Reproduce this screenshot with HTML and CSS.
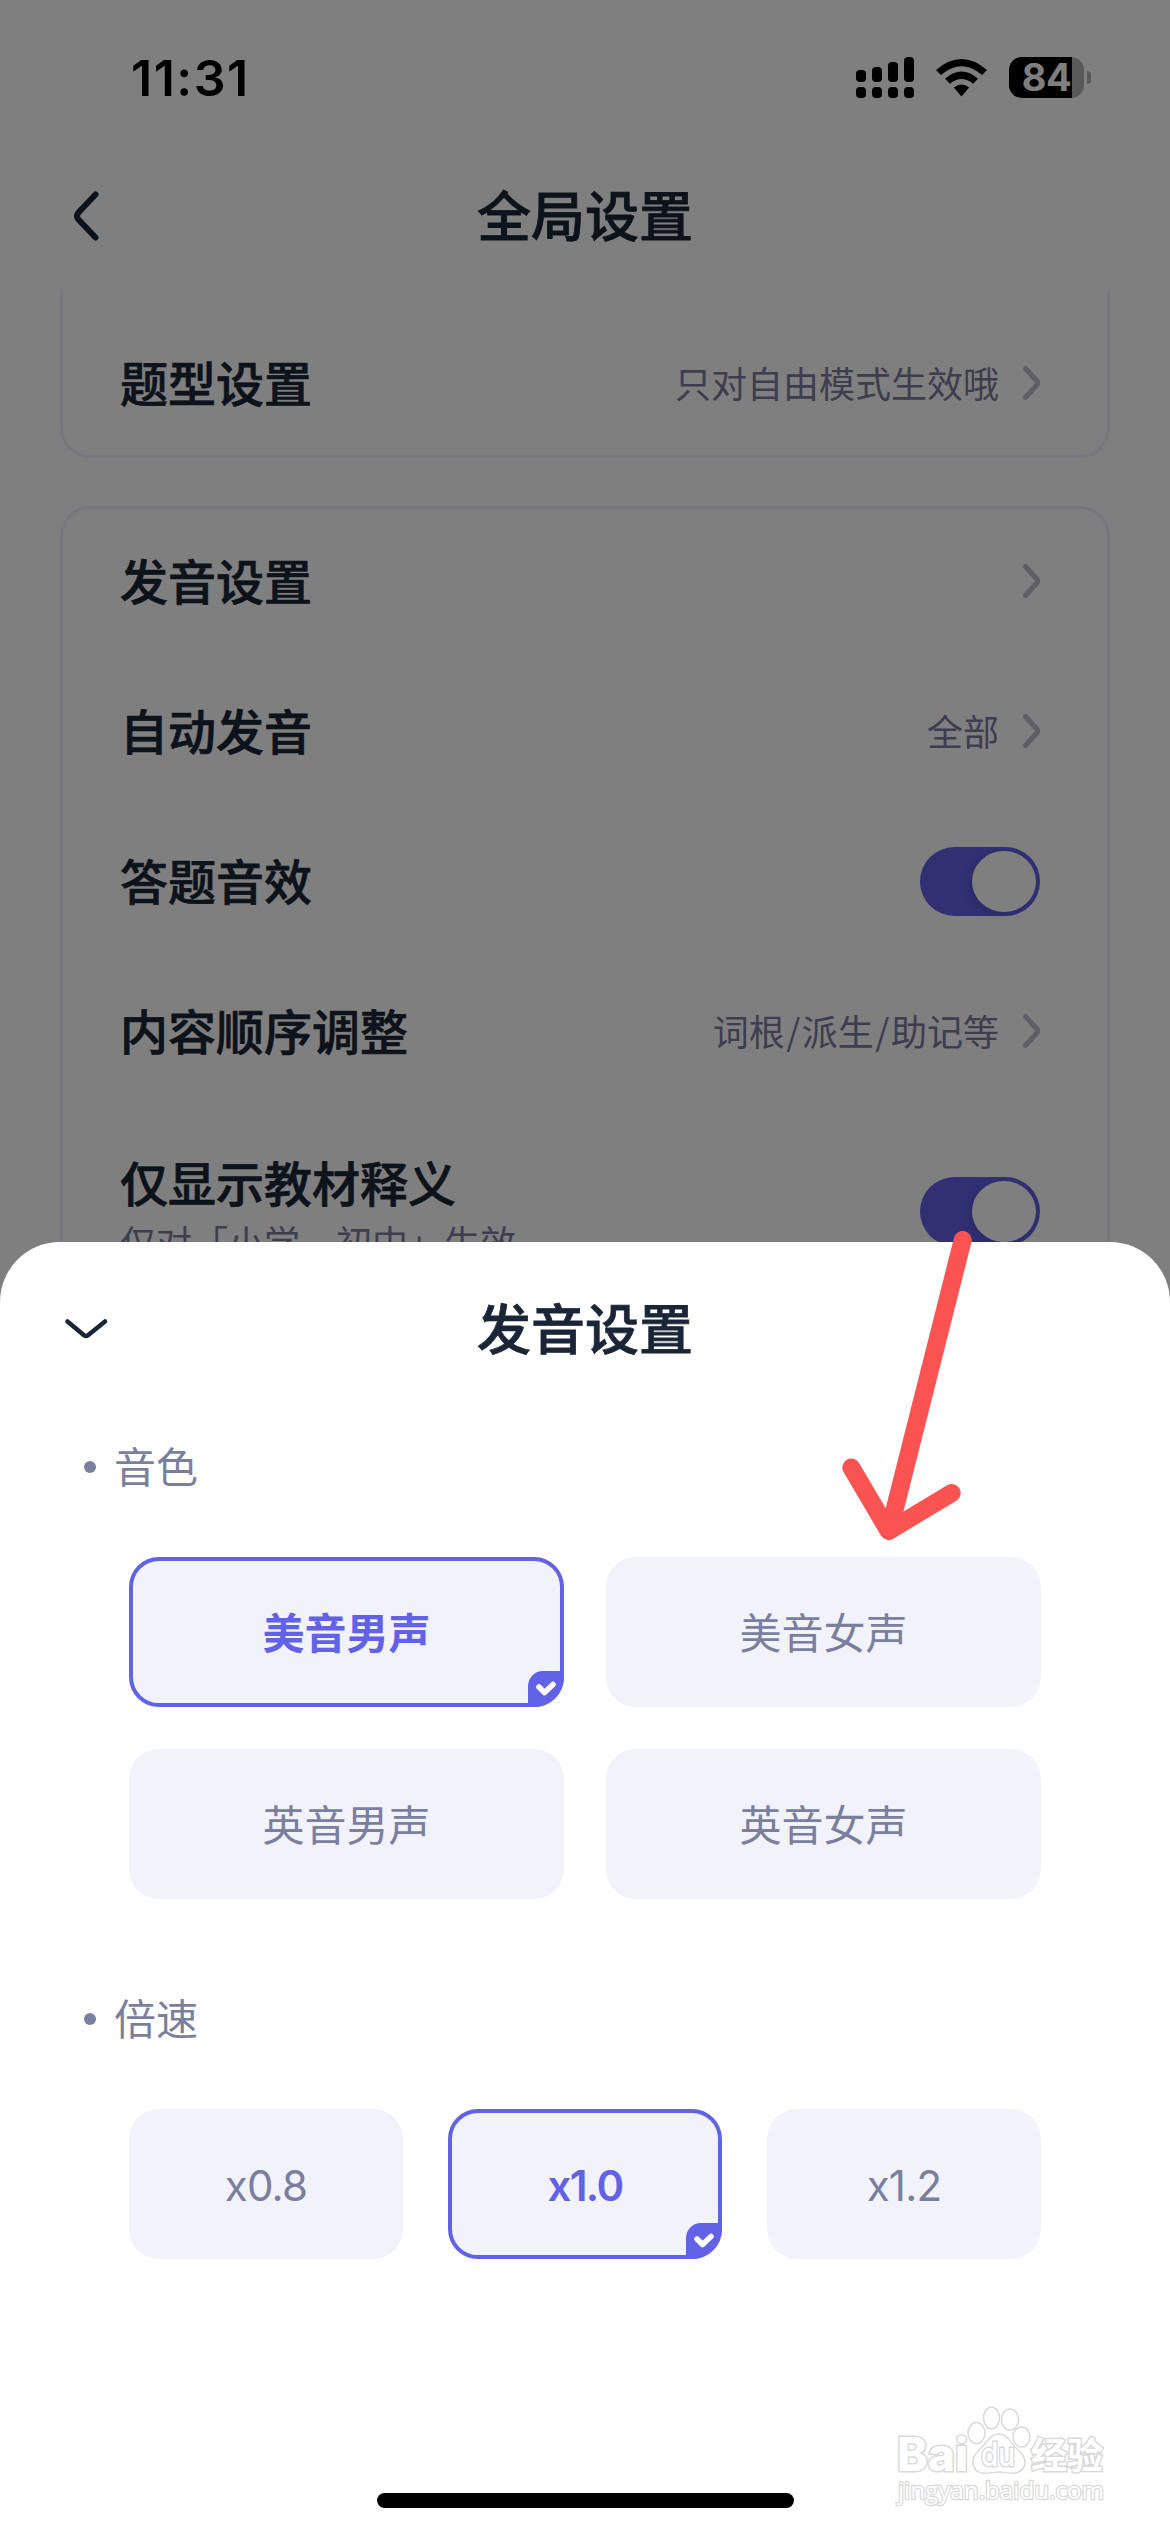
FILE: index.html
```html
<!DOCTYPE html>
<html lang="zh-CN">
<head>
<meta charset="utf-8">
<title>全局设置</title>
<link rel="stylesheet" href="styles.css">
</head>
<body>
<div class="screen">
  <div class="status">
    <span class="time">11:31</span>
    <div class="status-icons">
      <svg class="signal" width="58" height="41" viewBox="0 0 58 41">
        <rect x="0" y="13" width="10" height="12" rx="4"/><rect x="16" y="10" width="10" height="15" rx="4"/><rect x="32" y="5" width="10" height="20" rx="4"/><rect x="48" y="0" width="10" height="25" rx="4"/>
        <rect x="0" y="30" width="10" height="11" rx="4"/><rect x="16" y="30" width="10" height="11" rx="4"/><rect x="32" y="30" width="10" height="11" rx="4"/><rect x="48" y="30" width="10" height="11" rx="4"/>
      </svg>
      <svg class="wifi" width="51" height="38" viewBox="0 0 51 38">
        <path d="M0 11Q25.500 -11 51 11L46 16Q25.500 -1.500 5 16Z"/>
        <path d="M9 19.700Q25.500 5.500 42 19.700L37 24.700Q25.500 15.500 14 24.700Z"/>
        <path d="M17.800 28.500Q25.500 22.300 33.200 28.500L25.500 37.500Z"/>
      </svg>
      <div class="battery"><span class="battery-level">84</span></div>
      <span class="battery-nub"></span>
    </div>
  </div>
  <header class="nav">
    <svg class="back" width="26" height="50" viewBox="0 0 26 50"><path d="M22.500 3.500L5.500 21.500Q2.500 25 5.500 28.500L22.500 46.500"/></svg>
    <h1 class="title">全局设置</h1>
  </header>
  <main class="content">
    <section class="card card-cut">
      <div class="row"><span class="label">题型设置</span><span class="value">只对自由模式生效哦</span><svg class="chev" width="18" height="34" viewBox="0 0 18 34"><path d="M2.500 2.500L14 15.200Q15.500 17 14 18.800L2.500 31.500"/></svg></div>
    </section>
    <section class="card">
      <div class="row"><span class="label">发音设置</span><svg class="chev" width="18" height="34" viewBox="0 0 18 34"><path d="M2.500 2.500L14 15.200Q15.500 17 14 18.800L2.500 31.500"/></svg></div>
      <div class="row"><span class="label">自动发音</span><span class="value">全部</span><svg class="chev" width="18" height="34" viewBox="0 0 18 34"><path d="M2.500 2.500L14 15.200Q15.500 17 14 18.800L2.500 31.500"/></svg></div>
      <div class="row"><span class="label">答题音效</span><span class="switch"><i class="knob"></i></span></div>
      <div class="row"><span class="label">内容顺序调整</span><span class="value">词根<span class="slash">/</span>派生<span class="slash">/</span>助记等</span><svg class="chev" width="18" height="34" viewBox="0 0 18 34"><path d="M2.500 2.500L14 15.200Q15.500 17 14 18.800L2.500 31.500"/></svg></div>
      <div class="row row-tall"><div class="label">仅显示教材释义<small class="note">仅对「小学、初中」生效</small></div><span class="switch"><i class="knob"></i></span></div>
    </section>
  </main>

  <div class="mask">
    <div class="sheet">
      <div class="sheet-head">
        <svg class="down" width="46" height="24" viewBox="0 0 46 24"><path d="M4.500 4.500L21 18.200Q23 19.800 25 18.200L42 4.500"/></svg>
        <h2 class="title">发音设置</h2>
      </div>
      <h3 class="group"><span class="group-name">音色</span></h3>
      <div class="options options-two">
        <div class="option selected">美音男声<span class="badge"><svg width="36" height="36" viewBox="0 0 36 36"><path d="M11 16L16.500 21.500L25 13.500"/></svg></span></div>
        <div class="option">美音女声</div>
        <div class="option">英音男声</div>
        <div class="option">英音女声</div>
      </div>
      <h3 class="group group-speed"><span class="group-name">倍速</span></h3>
      <div class="options options-three">
        <div class="option">x0.8</div>
        <div class="option selected">x1.0<span class="badge"><svg width="36" height="36" viewBox="0 0 36 36"><path d="M11 16L16.500 21.500L25 13.500"/></svg></span></div>
        <div class="option">x1.2</div>
      </div>
      <div class="home-bar"></div>
    </div>
  </div>

  <svg class="arrow" width="140" height="322" viewBox="0 0 140 322">
    <path d="M122.700 20L51 304"/>
    <path d="M11.300 247.500L48.700 311L111.700 273"/>
  </svg>

  <svg class="watermark" width="220" height="110" viewBox="0 0 220 110">
    <g class="wm-outline">
      <text class="wm-brand" x="3" y="71" textLength="71" lengthAdjust="spacingAndGlyphs">Bai</text>
      <ellipse cx="82.500" cy="33" rx="8.500" ry="10.500"/>
      <ellipse cx="97.500" cy="18" rx="8" ry="11"/>
      <ellipse cx="116" cy="19.500" rx="8.500" ry="10.500"/>
      <ellipse cx="127.500" cy="37" rx="8.500" ry="10"/>
      <path d="M105 34C96 34 93 43 87 48C80 54 77 60 80 67C85 77 96 72 105 72C114 72 124 77 130 67C133 60 129 54 123 49C117 44 114 34 105 34Z"/>
      <text class="wm-du" x="87" y="66" textLength="34" lengthAdjust="spacingAndGlyphs">du</text>
      <text class="wm-cn" x="137" y="69">经验</text>
      <text class="wm-url" x="4" y="99" textLength="206" lengthAdjust="spacingAndGlyphs">jingyan.baidu.com</text>
    </g>
  </svg>
</div>
</body>
</html>
```
FILE: styles.css
```css
* { box-sizing: border-box; }

body {
  margin: 0;
  background: #fff;
  font-family: "Noto Sans CJK SC", sans-serif;
  color: #1a2637;
}

.screen {
  position: relative;
  display: flex;
  flex-direction: column;
  width: 1170px;
  height: 2532px;
  overflow: hidden;
}

/* status bar */
.status {
  display: flex;
  flex: none;
  justify-content: space-between;
  align-items: flex-start;
  height: 141px;
  padding: 48px 79px 0 131px;
  color: #000;
}

.time {
  font: 600 50px/60px Inter, sans-serif;
  letter-spacing: 1.500px;
}

.status-icons {
  display: flex;
  align-items: center;
  height: 59px;
}

.wifi { margin: 0 22px; }

.battery {
  display: flex;
  align-items: center;
  justify-content: center;
  width: 75px;
  height: 41px;
  border-radius: 13px;
  background: linear-gradient(90deg, #000 63px, #b2b2b2 63px);
}

.battery-level {
  font: 700 38px/41px Inter, sans-serif;
  letter-spacing: -0.5px;
  color: #fff;
}

.battery-nub {
  width: 4px;
  height: 13px;
  margin-left: 3px;
  border-radius: 0 4px 4px 0;
  background: #b2b2b2;
}

/* navigation */
.nav,
.sheet-head {
  display: grid;
  grid-template-columns: 120px 1fr 120px;
  align-items: center;
}

.nav {
  flex: none;
  height: 150px;
}

.title {
  margin: 0;
  padding-bottom: 4px;
  font-size: 54px;
  font-weight: 500;
  line-height: 72px;
  text-align: center;
  -webkit-text-stroke: .8px currentColor;
}

.back { margin-left: 73px; }

.back path,
.down path,
.chev path {
  fill: none;
  stroke: #1a2637;
  stroke-width: 6;
  stroke-linecap: round;
}

/* settings list */
.content {
  display: flex;
  flex: 1;
  flex-direction: column;
  gap: 48px;
  min-height: 0;
  padding: 0 60px;
  overflow: hidden;
}

.card {
  flex: none;
  padding: 0 70px 0 60px;
  border-radius: 30px;
  box-shadow: inset 0 0 0 3px #efeefc;
}

.card-cut {
  margin-top: -33px;
  padding-top: 50px;
}

.row {
  display: flex;
  align-items: center;
  height: 150px;
}

.row-tall { height: 211px; }

.label {
  flex: 1;
  padding-bottom: 4px;
  font-size: 48px;
  font-weight: 500;
  line-height: 66px;
  -webkit-text-stroke: .7px currentColor;
}

.value,
.note {
  padding-bottom: 3px;
  font-size: 36px;
  font-weight: 400;
  line-height: 54px;
  color: #7b7a9e;
  -webkit-text-stroke: 0;
}

.note { display: block; }

.slash { padding: 0 1.500px; }

.chev { margin: 0 -1px 0 24px; }

.chev path {
  stroke: #bdbcd0;
  stroke-width: 5;
}

.switch {
  display: flex;
  justify-content: flex-end;
  align-items: center;
  width: 120px;
  height: 69px;
  padding-right: 4px;
  border-radius: 35px;
  background: #6160e6;
}

.knob {
  width: 64px;
  height: 61px;
  border-radius: 50%;
  background: #fff;
  box-shadow: -3px 2px 10px rgba(0, 0, 0, .12);
}

/* bottom sheet */
.mask {
  position: absolute;
  inset: 0;
  display: flex;
  flex-direction: column;
  justify-content: flex-end;
  background: rgba(0, 0, 0, .5);
}

.sheet {
  display: flex;
  flex-direction: column;
  height: 1290px;
  padding: 0 0 24px;
  border-radius: 60px 60px 0 0;
  background: #fff;
}

.sheet-head { height: 174px; }

.down { margin-left: 63px; }

.down path { stroke-width: 4.500; }

.group {
  display: flex;
  align-items: center;
  gap: 18px;
  height: 60px;
  margin: 21px 0 60px 84px;
  font-size: 42px;
  font-weight: 400;
  line-height: 56px;
  color: #7a7f9e;
}

.group::before {
  content: "";
  width: 12px;
  height: 12px;
  border-radius: 50%;
  background: #7a7f9e;
}

.group-name { padding-bottom: 4px; }

.group-speed { margin-top: 90px; }

.options {
  display: grid;
  gap: 42px;
  padding: 0 129px;
}

.options-two { grid-template-columns: 1fr 1fr; }

.options-three {
  grid-template-columns: repeat(3, 1fr);
  column-gap: 45px;
}

.option {
  position: relative;
  display: flex;
  align-items: center;
  justify-content: center;
  height: 150px;
  padding-bottom: 4px;
  border-radius: 30px;
  background: #f2f2fb;
  font-size: 42px;
  color: #7a7f9e;
}

.options-three .option {
  padding: 2px 0 0;
  font-family: Inter, sans-serif;
  letter-spacing: -0.8px;
}

.selected {
  border: 4px solid #6162e6;
  font-weight: 600;
  color: #6162e6;
}

.options-three .selected { letter-spacing: -1.6px; }

.badge {
  position: absolute;
  right: -4px;
  bottom: -4px;
  width: 36px;
  height: 36px;
  border-radius: 15px 0 30px;
  background: #6162e6;
}

.badge svg { display: block; }

.badge path {
  fill: none;
  stroke: #fff;
  stroke-width: 5.500;
  stroke-linecap: round;
  stroke-linejoin: round;
}

.home-bar {
  width: 417px;
  height: 15px;
  margin: auto auto 0;
  border-radius: 8px;
  background: #000;
}

/* annotation arrow and watermark lie over the interface */
.arrow {
  position: absolute;
  left: 840px;
  top: 1220px;
}

.arrow path {
  fill: none;
  stroke: #fb5252;
  stroke-width: 18;
  stroke-linecap: round;
  stroke-linejoin: round;
}

.watermark {
  position: absolute;
  left: 894px;
  top: 2400px;
}

.wm-outline {
  fill: #fff;
  stroke: #d9d9d9;
  stroke-width: 1.500;
}

.wm-outline text {
  paint-order: stroke;
  stroke-width: 3;
}

.wm-brand { font: 800 46px Inter, sans-serif; }
.wm-du { font: 500 32px Inter, sans-serif; }
.wm-cn { font: 700 36px "Noto Sans CJK SC", sans-serif; }
.wm-outline .wm-url {
  font: 400 24px "Open Sans", sans-serif;
  stroke-width: 2.500;
}
```
